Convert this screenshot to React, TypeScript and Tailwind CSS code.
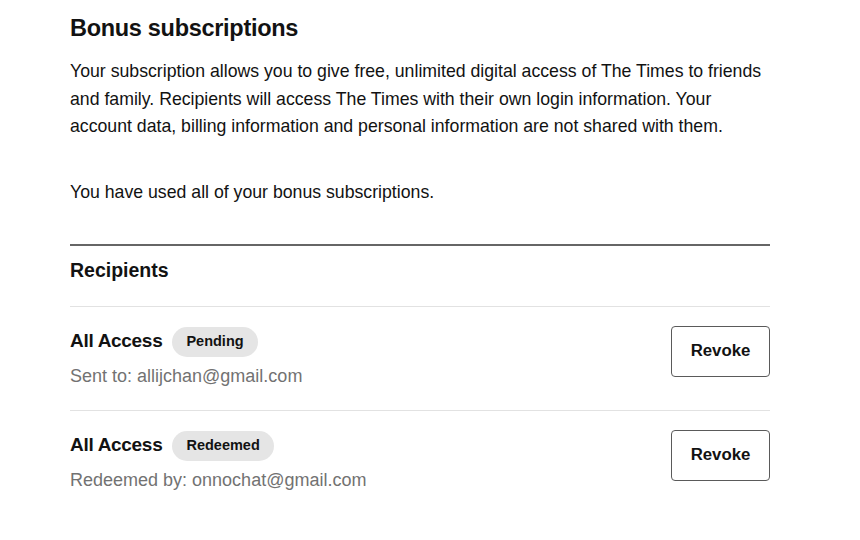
const font = { fontFamily: '"Liberation Sans", Arial, sans-serif' };

function Badge({ label }: { label: string }) {
  return (
    <span className="inline-flex h-[30px] items-center rounded-full bg-[#e5e5e5] px-[14px] text-[14.5px] font-bold text-[#121212]">
      {label}
    </span>
  );
}

function RecipientRow({ status, detail }: { status: string; detail: string }) {
  return (
    <div className="flex items-start justify-between border-t border-[#e2e2e2] pb-[22px] pt-[19px]">
      <div className="mt-[1px] flex flex-col gap-[7px]">
        <div className="flex h-[30px] items-center gap-[10px]">
          <span className="text-[19px] font-bold tracking-[-0.3px] text-[#121212]">All Access</span>
          <Badge label={status} />
        </div>
        <span className="text-[18px] leading-[24px] text-[#727272]">{detail}</span>
      </div>
      <button className="h-[51px] w-[99px] rounded-[4px] border border-[#5a5a5a] bg-white text-[16.8px] font-bold text-[#121212]">
        Revoke
      </button>
    </div>
  );
}

export default function App() {
  return (
    <div className="min-h-[540px] w-[860px] bg-white pl-[70px] pt-[14px] text-[#121212]" style={font}>
      <div className="w-[700px]">
        <h2 className="text-[23.5px] font-bold leading-[28px] tracking-[-0.3px]">Bonus subscriptions</h2>
        <p className="mt-[16px] whitespace-nowrap text-[17.7px] leading-[27.5px]">
          Your subscription allows you to give free, unlimited digital access of The Times to friends
          <br />
          and family. Recipients will access The Times with their own login information. Your
          <br />
          account data, billing information and personal information are not shared with them.
        </p>
        <p className="mt-[38px] text-[17.7px] leading-[27px]">You have used all of your bonus subscriptions.</p>
        <div className="mt-[38px] border-t-2 border-[#666666]" />
        <h3 className="pb-[24px] pt-[12px] text-[19.5px] font-bold leading-[24px]">Recipients</h3>
        <RecipientRow status="Pending" detail="Sent to: allijchan@gmail.com" />
        <RecipientRow status="Redeemed" detail="Redeemed by: onnochat@gmail.com" />
      </div>
    </div>
  );
}
